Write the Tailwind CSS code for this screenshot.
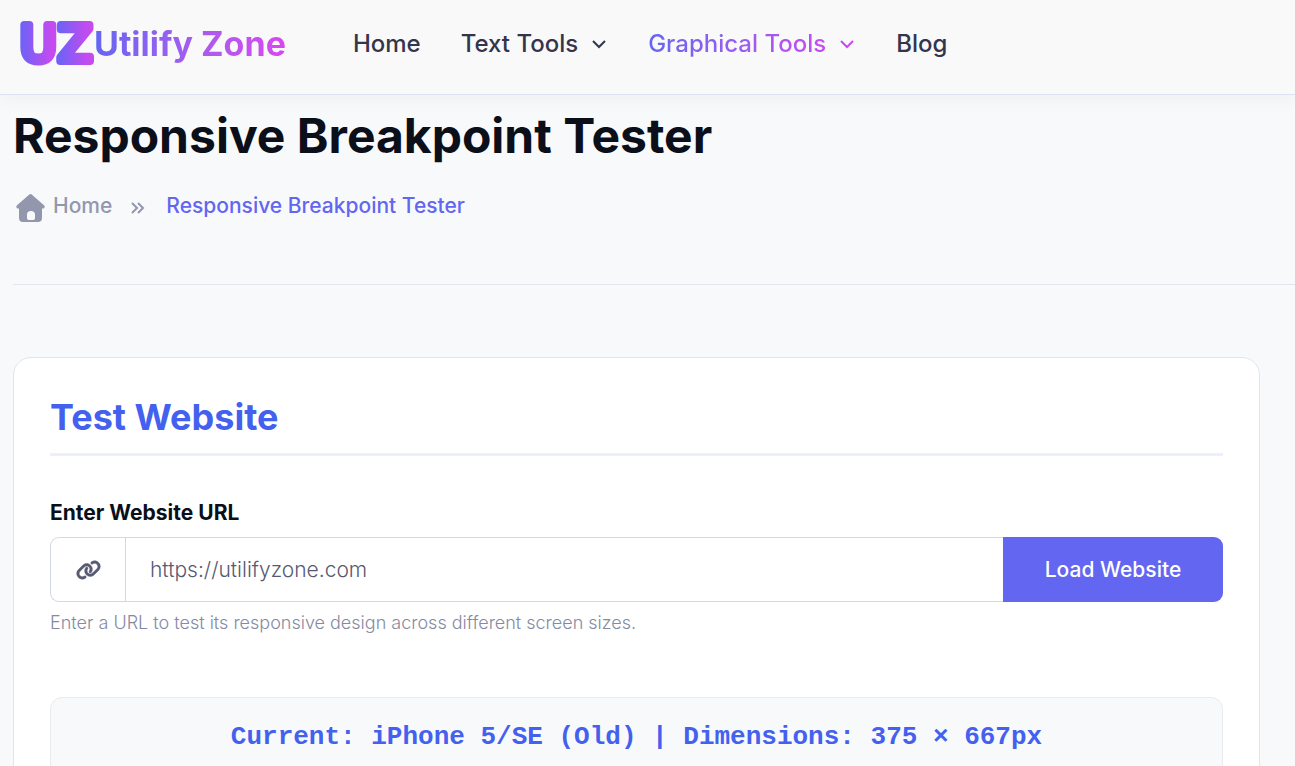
<!DOCTYPE html>
<html lang="en">
<head>
    <meta charset="UTF-8">
    <meta name="viewport" content="width=device-width, initial-scale=1.0">
    <title>Responsive Breakpoint Tester | Utilify Zone</title>
    <script src="https://cdn.jsdelivr.net/npm/@tailwindcss/browser@4"></script>
</head>
<body class="bg-[#f8f9fb] font-['Inter',sans-serif] text-[#0b0f19] overflow-x-hidden">

<!-- Navbar -->
<header class="flex items-center h-[95px] pb-[6px] pl-[18px] bg-[#f9f9f9] border-b border-[#dfe2f1] shadow-[0_8px_16px_rgba(11,15,25,0.03)]">
    <a href="/" class="flex items-center">
        <svg class="w-[76px] h-12 overflow-visible" viewBox="0 0 76 48" role="img" aria-label="UZ">
            <defs>
                <linearGradient id="logo-gradient" x1="0" y1="0" x2="1" y2="0">
                    <stop offset="0.05" stop-color="#6f62f6"/>
                    <stop offset="0.85" stop-color="#c44bf0"/>
                </linearGradient>
            </defs>
            <g fill="url(#logo-gradient)" stroke="url(#logo-gradient)" stroke-width="8" stroke-linejoin="round" font-family="DejaVu Sans, sans-serif" font-size="50">
                <text x="2" y="41">U</text>
                <text x="40" y="41">Z</text>
            </g>
        </svg>
        <span class="text-[34px] leading-[48px] font-bold bg-linear-to-r from-[#6366f1] to-[#d946ef] bg-clip-text text-transparent whitespace-nowrap">Utilify Zone</span>
    </a>
    <nav class="flex items-center gap-10 ml-[67px] text-[24px] leading-9 font-medium text-[#33354d] whitespace-nowrap">
        <a href="#">Home</a>
        <a href="#" class="flex items-center gap-3">
            Text Tools
            <svg class="w-[18px] h-[18px]" viewBox="0 0 18 18" fill="none" stroke="currentColor" stroke-width="2"><path d="M3 6l6 6 6-6"/></svg>
        </a>
        <a href="#" class="flex items-center gap-3">
            <span class="bg-linear-to-r from-[#6366f1] to-[#c44bf0] bg-clip-text text-transparent">Graphical Tools</span>
            <svg class="w-[18px] h-[18px] text-[#cc49ef]" viewBox="0 0 18 18" fill="none" stroke="currentColor" stroke-width="2"><path d="M3 6l6 6 6-6"/></svg>
        </a>
        <a href="#">Blog</a>
    </nav>
</header>

<main class="pl-[13px]">
    <!-- Title and breadcrumb -->
    <section class="pt-[11px] pb-[60px] border-b border-[#e2e5f1]">
        <h1 class="text-[48px] leading-[60px] font-bold">Responsive Breakpoint Tester</h1>
        <nav aria-label="Breadcrumb" class="mt-[22px] flex items-center text-[21px] leading-9 font-medium text-[#9397ad]">
            <a href="/" class="flex items-center gap-2">
                <svg class="w-8 h-8" viewBox="0 -2 32 32" fill="currentColor">
                    <path fill-rule="evenodd" d="M16.3 2.5q1.2-.9 2.4 0L31 13.3q1.2 1.4.3 2.7-.4.6-2.3.6V26q0 4-4 4H10q-4 0-4-4V16.6q-1.900 0-2.300-.6-.9-1.300.3-2.700zM15.700 28h4.600q1.700 0 1.700-1.700V22.500q0-3.500-4-3.500t-4 3.500v3.800q0 1.700 1.700 1.700z"/>
                </svg>
                Home
            </a>
            <svg class="w-4 h-4 ml-[18px] mr-5" viewBox="0 0 16 16" fill="none" stroke="currentColor" stroke-width="2"><path d="M2 5l5 5-5 5M8 5l5 5-5 5"/></svg>
            <span class="text-[#6366f1]" aria-current="page">Responsive Breakpoint Tester</span>
        </nav>
    </section>

    <!-- Tester card -->
    <section class="mt-[72px] mr-[35px] px-9 pt-[35px] pb-9 bg-white border border-[#e2e5f1] rounded-[18px]">
        <h2 class="pb-[12px] border-b-3 border-[#eceffd] text-[36px] leading-[48px] font-bold text-[#4361ee]">Test Website</h2>
        <form class="mt-10">
            <label for="website-url" class="block text-[21px] leading-[34px] font-bold">Enter Website URL</label>
            <div class="mt-[7px] flex h-[65px]">
                <span class="flex items-center justify-center w-[75px] border border-r-0 border-[#d4d7e5] rounded-l-[9px] text-[#565973]">
                    <svg class="w-[25px] h-5" viewBox="0 0 640 512" fill="currentColor" stroke="currentColor" stroke-width="12"><path d="M579.8 267.7c56.5-56.5 56.5-148 0-204.5c-50-50-128.8-56.5-186.3-15.4l-1.6 1.1c-14.4 10.3-17.7 30.3-7.4 44.6s30.3 17.7 44.6 7.4l1.6-1.1c32.1-22.9 76-19.3 103.8 8.6c31.5 31.5 31.5 82.5 0 114L422.3 334.8c-31.5 31.5-82.5 31.5-114 0c-27.9-27.9-31.5-71.8-8.6-103.8l1.1-1.6c10.3-14.4 6.9-34.4-7.4-44.6s-34.4-6.9-44.6 7.4l-1.1 1.6C206.5 251.2 213 330 263 380c56.5 56.5 148 56.5 204.5 0L579.8 267.7zM60.2 244.3c-56.5 56.5-56.5 148 0 204.5c50 50 128.8 56.5 186.3 15.4l1.6-1.1c14.4-10.3 17.7-30.3 7.4-44.6s-30.3-17.7-44.6-7.4l-1.6 1.1c-32.1 22.9-76 19.3-103.8-8.6C74 372 74 321 105.5 289.5L217.7 177.2c31.5-31.5 82.5-31.5 114 0c27.9 27.9 31.5 71.8 8.6 103.9l-1.1 1.6c-10.3 14.4-6.9 34.4 7.4 44.6s34.4 6.9 44.6-7.4l1.1-1.6C433.5 260.8 427 182 377 132c-56.5-56.5-148-56.5-204.5 0L60.2 244.3z"/></svg>
                </span>
                <input type="url" id="website-url" value="https://utilifyzone.com" class="flex-1 min-w-0 px-6 border border-r-0 border-[#d4d7e5] text-[21px] font-light text-[#565973] bg-white focus:outline-none">
                <button type="button" class="w-[220px] bg-[#6366f1] rounded-r-[9px] text-[21px] font-medium text-white">Load Website</button>
            </div>
            <p class="mt-[6px] text-[18px] leading-[30px] font-light text-[#858aa3]">Enter a URL to test its responsive design across different screen sizes.</p>
        </form>

        <!-- Current device -->
        <div class="mt-[59px] p-[23px] bg-[#f8f9fb] border border-[#e9ebef] rounded-xl text-center text-[26px] leading-8 font-bold text-[#4361ee] font-['Courier_New','Liberation_Mono',monospace]">
            Current: iPhone 5/SE (Old) | Dimensions: 375 × 667px
        </div>
    </section>
</main>

</body>
</html>
